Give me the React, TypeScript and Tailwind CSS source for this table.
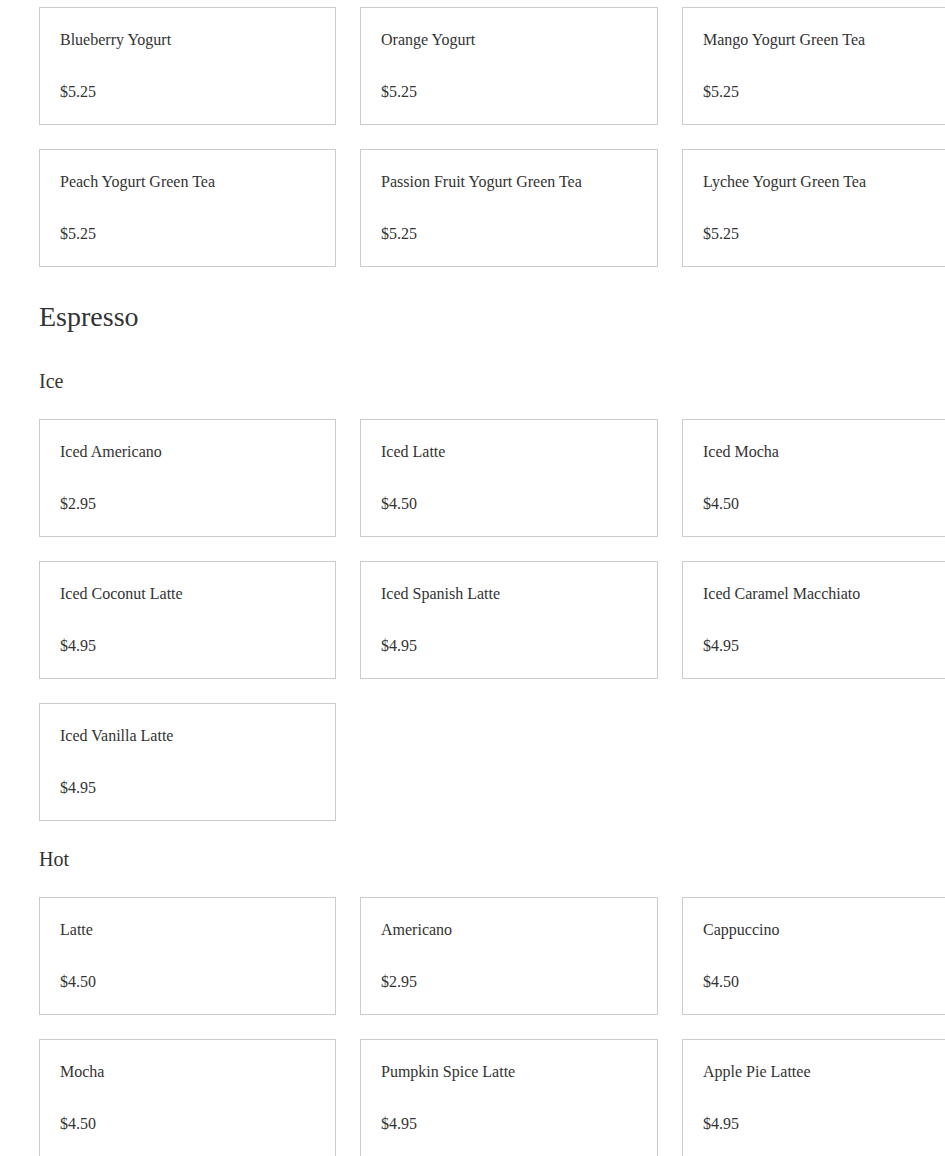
type Item = { name: string; price: string };

const yogurt: Item[] = [
  { name: 'Blueberry Yogurt', price: '$5.25' },
  { name: 'Orange Yogurt', price: '$5.25' },
  { name: 'Mango Yogurt Green Tea', price: '$5.25' },
  { name: 'Peach Yogurt Green Tea', price: '$5.25' },
  { name: 'Passion Fruit Yogurt Green Tea', price: '$5.25' },
  { name: 'Lychee Yogurt Green Tea', price: '$5.25' },
];

const iced: Item[] = [
  { name: 'Iced Americano', price: '$2.95' },
  { name: 'Iced Latte', price: '$4.50' },
  { name: 'Iced Mocha', price: '$4.50' },
  { name: 'Iced Coconut Latte', price: '$4.95' },
  { name: 'Iced Spanish Latte', price: '$4.95' },
  { name: 'Iced Caramel Macchiato', price: '$4.95' },
  { name: 'Iced Vanilla Latte', price: '$4.95' },
];

const hot: Item[] = [
  { name: 'Latte', price: '$4.50' },
  { name: 'Americano', price: '$2.95' },
  { name: 'Cappuccino', price: '$4.50' },
  { name: 'Mocha', price: '$4.50' },
  { name: 'Pumpkin Spice Latte', price: '$4.95' },
  { name: 'Apple Pie Lattee', price: '$4.95' },
];

function MenuGrid({ items }: { items: Item[] }) {
  return (
    <div className="grid grid-cols-[297px_298px_297px] gap-6">
      {items.map((item) => (
        <div key={item.name} className="border border-[#cccccc] bg-white p-5">
          <p className="text-base leading-6">{item.name}</p>
          <p className="mt-7 text-base leading-6">{item.price}</p>
        </div>
      ))}
    </div>
  );
}

export default function App() {
  return (
    <div className="h-[1156px] w-[945px] overflow-hidden bg-white font-['Liberation_Serif',serif] text-[#333333]">
      <div className="w-[1000px] pl-[39px] pt-[7px]">
        <MenuGrid items={yogurt} />

        <h2 className="mt-8 text-[28px] leading-9">Espresso</h2>

        <h3 className="mt-8 mb-6 text-xl leading-7">Ice</h3>
        <MenuGrid items={iced} />

        <h3 className="mt-6 mb-6 text-xl leading-7">Hot</h3>
        <MenuGrid items={hot} />
      </div>
    </div>
  );
}
